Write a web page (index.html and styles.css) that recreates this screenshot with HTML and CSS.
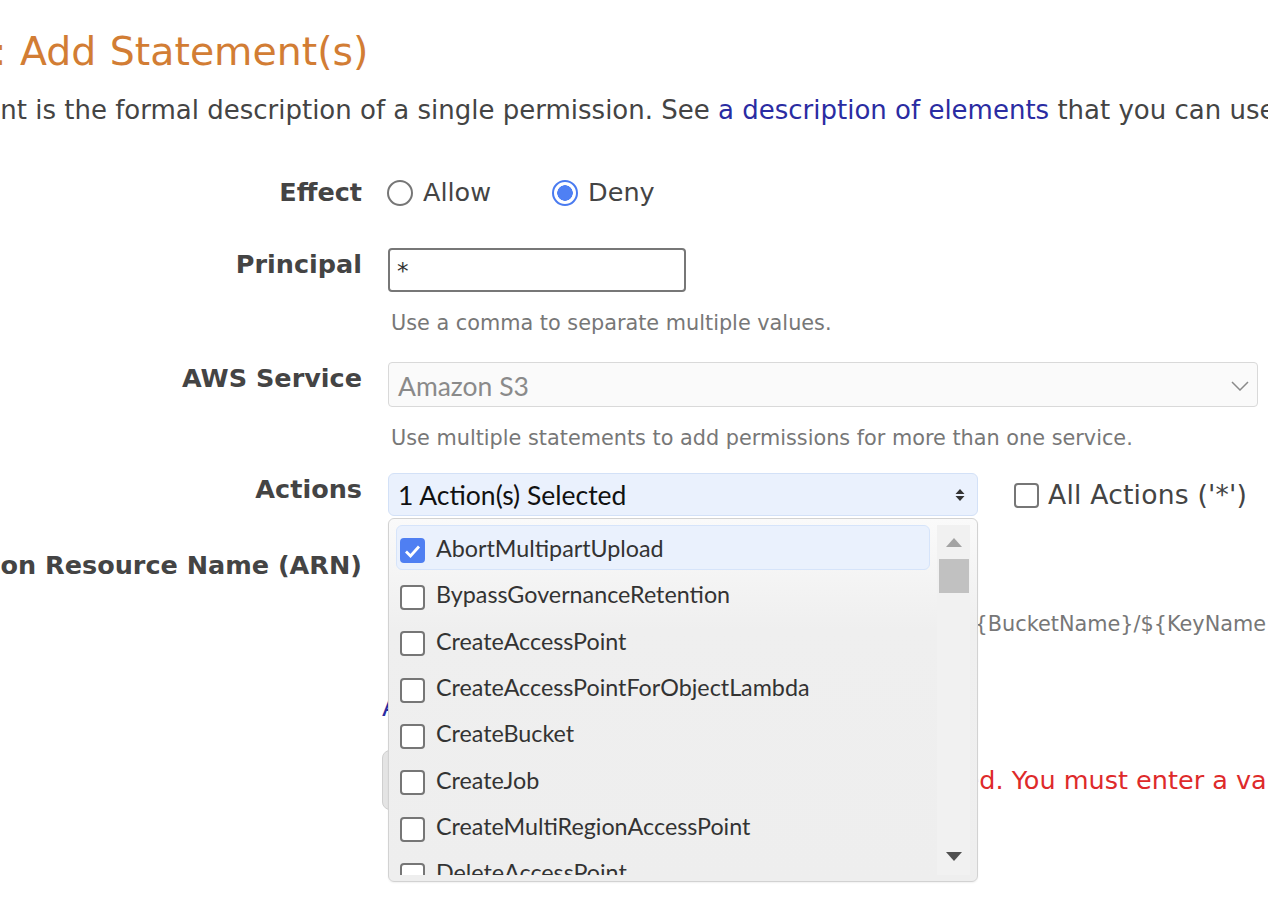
FILE: index.html
```html
<!DOCTYPE html>
<html lang="en">
<head>
<meta charset="utf-8">
<title>AWS Policy Generator - Add Statement(s)</title>
<link rel="stylesheet" href="styles.css">
</head>
<body>
<div class="page">
  <h2 class="title">Step 2: Add Statement(s)</h2>
  <p class="intro">A statement is the formal description of a single permission. See <a class="link" href="#">a description of elements</a> that you can use in statements.</p>

  <div class="form">
    <div class="row row-effect">
      <div class="label">Effect</div>
      <div class="control radios">
        <span class="radio"><span class="radio-dot"></span>Allow</span>
        <span class="radio"><span class="radio-dot is-on"></span>Deny</span>
      </div>
    </div>

    <div class="row row-principal">
      <div class="label">Principal</div>
      <div class="control">
        <div class="text-input">*</div>
        <div class="help">Use a comma to separate multiple values.</div>
      </div>
    </div>

    <div class="row row-service">
      <div class="label">AWS Service</div>
      <div class="control">
        <div class="select">
          <span>Amazon S3</span>
          <svg class="chevron" width="18" height="10" viewBox="0 0 18 10"><path d="M1 1 L9 9 L17 1" fill="none" stroke="#8a8a8a" stroke-width="1.5"/></svg>
        </div>
        <div class="help">Use multiple statements to add permissions for more than one service.</div>
      </div>
    </div>

    <div class="row row-actions">
      <div class="label">Actions</div>
      <div class="control actions-line">
        <div class="multi">
          <div class="multi-button">
            <span>1 Action(s) Selected</span>
            <svg class="updown" width="10" height="14" viewBox="0 0 10 14"><path d="M0.5 6 L5 1 L9.5 6 Z M0.5 8 L5 13 L9.5 8 Z" fill="#333"/></svg>
          </div>
          <div class="dropdown">
            <ul class="options">
              <li class="option is-selected"><span class="check is-on"><svg width="17" height="14" viewBox="0 0 17 14"><path d="M2 7.5 L6.5 12 L15 2.5" fill="none" stroke="#fff" stroke-width="2.8"/></svg></span>AbortMultipartUpload</li>
              <li class="option"><span class="check"></span>BypassGovernanceRetention</li>
              <li class="option"><span class="check"></span>CreateAccessPoint</li>
              <li class="option"><span class="check"></span>CreateAccessPointForObjectLambda</li>
              <li class="option"><span class="check"></span>CreateBucket</li>
              <li class="option"><span class="check"></span>CreateJob</li>
              <li class="option"><span class="check"></span>CreateMultiRegionAccessPoint</li>
              <li class="option"><span class="check"></span>DeleteAccessPoint</li>
              <li class="option"><span class="check"></span>DeleteAccessPointForObjectLambda</li>
            </ul>
            <div class="scrollbar">
              <div class="sb-arrow"><svg width="16" height="9" viewBox="0 0 16 9"><path d="M0 9 L8 0 L16 9 Z" fill="#a3a3a3"/></svg></div>
              <div class="sb-thumb"></div>
              <div class="sb-track"></div>
              <div class="sb-arrow"><svg width="16" height="9" viewBox="0 0 16 9"><path d="M0 0 L8 9 L16 0 Z" fill="#505050"/></svg></div>
            </div>
          </div>
        </div>
        <span class="all-actions"><span class="check"></span>All Actions ('*')</span>
      </div>
    </div>

    <div class="row row-arn">
      <div class="label">Amazon Resource Name (ARN)</div>
      <div class="control">
        <div class="text-input"></div>
        <div class="help"><span class="fmt-pre">ARN should follow the following format: arn:aws:s3:::$</span>{BucketName}/${KeyName}.</div>
      </div>
    </div>

    <div class="row row-cond">
      <div class="label"></div>
      <div class="control"><a class="link cond-link" href="#">Add Conditions (Optional)</a></div>
    </div>

    <div class="row row-submit">
      <div class="label"></div>
      <div class="control submit-line">
        <span class="btn">Add Statement</span>
        <span class="error">ARN field is required. You must enter a valid ARN.</span>
      </div>
    </div>
  </div>
</div>
</body>
</html>
```

FILE: styles.css
```css
* { box-sizing: border-box; }

html, body {
  height: 100%;
}

body {
  margin: 0;
  overflow: hidden;
  background: #ffffff;
  font-family: "DejaVu Sans", Verdana, sans-serif;
  color: #444444;
}

.page {
  margin-left: -132px;
  padding-top: 28px;
  min-height: 911px;
}

.title {
  margin: 0 0 0 -3px;
  font-size: 39.4px;
  line-height: 47px;
  font-weight: normal;
  color: #d27d34;
  white-space: nowrap;
  word-spacing: 1px;
}

.intro {
  margin: 19px 0 0 -1px;
  font-size: 26px;
  line-height: 32px;
  white-space: nowrap;
}

.link {
  color: #2a2ca2;
  text-decoration: none;
}

.form {
  margin-top: 50px;
}

.row {
  display: flex;
  align-items: flex-start;
  gap: 26px;
}

.label {
  flex: none;
  width: 494px;
  text-align: right;
  font-weight: bold;
  font-size: 25.5px;
  line-height: 32px;
  white-space: nowrap;
  color: #444444;
}

.control {
  font-size: 25.5px;
  line-height: 32px;
}

.row-principal { margin-top: 40px; }
.row-service { margin-top: 26px; }
.row-actions { margin-top: 22px; }
.row-arn { margin-top: 33px; }
.row-cond { margin-top: 54px; }
.row-submit { margin-top: 27px; }

/* radios */
.radios {
  display: flex;
  align-items: center;
  height: 32px;
}

.radio {
  display: inline-flex;
  align-items: center;
  gap: 10px;
  margin-right: 62px;
  margin-left: -1px;
}

.radio-dot {
  width: 26px;
  height: 26px;
  border-radius: 50%;
  border: 2px solid #767676;
  background: #fff;
  position: relative;
  top: 1px;
}

.radio-dot.is-on {
  border-color: #4a7bf0;
  background: radial-gradient(circle, #4f80f4 0 7.5px, #fff 8px);
}

/* text input */
.text-input {
  width: 298px;
  height: 44px;
  border: 2px solid #777777;
  border-radius: 4px;
  padding: 4px 0 0 7px;
  font-size: 23px;
  line-height: 34px;
  color: #333;
}

.help {
  margin-top: 18px;
  padding-left: 3px;
  font-size: 20.8px;
  line-height: 26px;
  color: #777777;
  white-space: nowrap;
}

.fmt-pre { letter-spacing: 0.34px; }

/* select */
.select {
  width: 870px;
  height: 45px;
  background: #fafafa;
  border: 1px solid #d9d9d9;
  border-radius: 4px;
  display: flex;
  align-items: center;
  justify-content: space-between;
  padding: 2px 8px 0 9px;
  font-family: Lato, "Open Sans", sans-serif;
  font-size: 26.5px;
  color: #8a8a8a;
}

/* actions multiselect */
.actions-line {
  display: flex;
  align-items: flex-start;
}

.multi {
  position: relative;
  width: 590px;
}

.multi-button {
  height: 43px;
  background: #eaf1fd;
  border: 1px solid #d3e1f7;
  border-radius: 6px;
  display: flex;
  align-items: center;
  justify-content: space-between;
  padding: 0 12px 0 9px;
  font-family: Lato, "Open Sans", sans-serif;
  font-size: 26.5px;
  color: #111;
}

.dropdown {
  position: absolute;
  z-index: 2;
  left: 0;
  top: 45px;
  width: 590px;
  height: 364px;
  border: 1px solid #d2d2d2;
  border-radius: 6px;
  background: linear-gradient(#fafafa 0, #efefef 110px, #eeeeee 100%);
  padding: 6px 7px 6px 7px;
  display: flex;
  gap: 7px;
  box-shadow: 0 1px 2px rgba(0,0,0,0.06);
}

.options {
  list-style: none;
  margin: 0;
  padding: 0;
  flex: 1;
  height: 350px;
  overflow: hidden;
}

.option {
  height: 46.33px;
  display: flex;
  align-items: center;
  gap: 11px;
  padding-left: 3px;
  border: 1px solid transparent;
  border-radius: 6px;
  font-family: Lato, "Open Sans", sans-serif;
  font-size: 23.3px;
  color: #333;
  white-space: nowrap;
}

.option.is-selected {
  height: 45px;
  margin-bottom: 1.33px;
  background: #eaf1fd;
  border-color: #d6e4fa;
}

.check {
  flex: none;
  width: 25px;
  height: 25px;
  border: 2px solid #767676;
  border-radius: 4px;
  background: #fff;
  position: relative;
  top: 3px;
  display: inline-flex;
  align-items: center;
  justify-content: center;
}

.check.is-on {
  background: #4f7ff2;
  border-color: #4f7ff2;
}

.scrollbar {
  flex: none;
  width: 33px;
  height: 350px;
  background: #f1f1f1;
  display: flex;
  flex-direction: column;
}

.sb-arrow {
  height: 34px;
  display: flex;
  align-items: center;
  justify-content: center;
}

.sb-arrow:last-child { height: 37px; }

.sb-thumb {
  height: 34px;
  margin: 0 1px 0 2px;
  background: #c1c1c1;
}

.sb-track { flex: 1; }

.all-actions {
  margin-left: 36px;
  display: inline-flex;
  align-items: center;
  gap: 9px;
  height: 43px;
  font-size: 26.6px;
  letter-spacing: 0.2px;
  white-space: nowrap;
}

.all-actions .check { top: 1px; }

/* conditions & submit */
.cond-link {
  margin-left: -6px;
  white-space: nowrap;
}

.submit-line {
  display: flex;
  align-items: center;
  margin-left: -6px;
  white-space: nowrap;
}

.btn {
  height: 60px;
  display: inline-flex;
  align-items: center;
  padding: 0 20px;
  background: #e4e4e4;
  border: 1px solid #cfcfcf;
  border-radius: 8px;
  color: #333;
}

.error {
  margin-left: 119px;
  color: #de2a2a;
}
```
